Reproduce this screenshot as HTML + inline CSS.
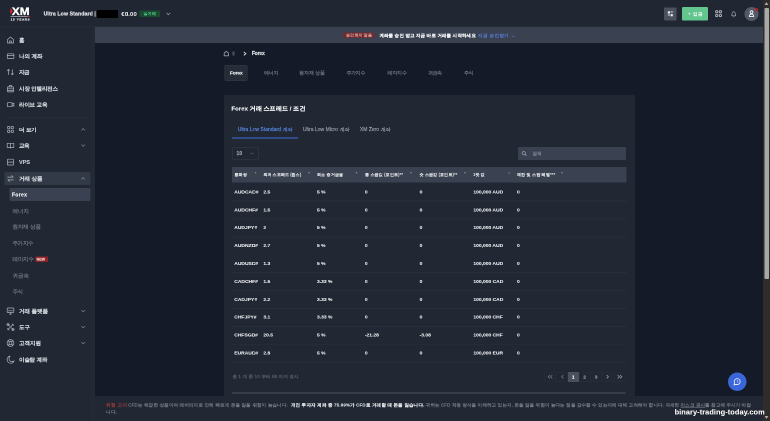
<!DOCTYPE html>
<html><head><meta charset="utf-8">
<style>
*{box-sizing:border-box;margin:0;padding:0}
html,body{width:770px;height:421px;overflow:hidden;background:#141a27;font-family:"Liberation Sans",sans-serif}
#root{position:absolute;left:0;top:0;width:1540px;height:842px;transform:scale(0.5);transform-origin:0 0;overflow:hidden;background:#141a27;will-change:transform}
.a{position:absolute;white-space:nowrap}
.t{font-family:"Liberation Sans",sans-serif;-webkit-text-stroke:0.3px currentColor}
svg{overflow:visible}
b{font-weight:bold}
</style></head><body><div id="root">
<div class="a" style="left:0px;top:0px;width:1526px;height:54px;background:#202632;"></div>
<div class="a" style="left:0px;top:53.0px;width:1526px;height:1.0px;background:#2a303b;"></div>
<div class="a" style="left:0px;top:54px;width:190px;height:788px;background:#212733;"></div>
<div class="a" style="left:182px;top:54px;width:8px;height:788px;background:#232935;"></div>
<div class="a" style="left:190px;top:54px;width:1336px;height:32px;background:#3a4150;"></div>
<svg class="a" style="left:20px;top:14px;" width="42px" height="28px" viewBox="0 0 21 14"><polygon points="0.3,0.9 2.9,4.1 0.3,7.4" fill="#e0282e"/><text x="1.9" y="8.2" font-family="Liberation Sans" font-weight="bold" font-size="10.8" fill="#fff" stroke="#fff" stroke-width="0.35" textLength="17.6" lengthAdjust="spacingAndGlyphs">XM</text><rect x="0.5" y="9.1" width="17" height="0.8" fill="#aab0b8"/><rect x="17.5" y="9.1" width="2.4" height="0.8" fill="#e0282e"/><text x="0.7" y="13.5" font-family="Liberation Sans" font-weight="bold" font-size="3.0" fill="#e4e6ea" stroke="#e4e6ea" stroke-width="0.2" textLength="18.9" lengthAdjust="spacing">15 YEARS</text></svg>
<div class="a t" style="left:87.2px;top:20.28px;line-height:16.64px;font-size:10.4px;color:#e6e8ec;font-weight:bold;letter-spacing:0.182px;">Ultra Low Standard |</div>
<div class="a" style="left:194px;top:20px;width:41.6px;height:16.4px;background:#000;"></div>
<div class="a t" style="left:242.6px;top:19.16px;line-height:18.88px;font-size:11.8px;color:#eef0f3;font-weight:bold;-webkit-text-stroke:0;letter-spacing:0.374px;">€0.00</div>
<div class="a" style="left:279.0px;top:21.0px;width:41.0px;height:13.0px;background:#1b4a31;border-radius:1px;"></div>
<div class="a t" style="left:287.2px;top:22.0px;line-height:12.8px;font-size:8.0px;color:#50cc8c;font-weight:normal;letter-spacing:0.18px;">실거래</div>
<svg class="a" style="left:332.4px;top:25.2px;" width="9.2px" height="5.6px" viewBox="0 0 4.6 2.8"><polyline points="0.4,0.4 2.3,2.3 4.2,0.4" fill="none" stroke="#9aa0a9" stroke-width="0.7"/></svg>
<div class="a" style="left:1328px;top:15.0px;width:25.0px;height:25.6px;background:#4b515d;border-radius:2px;"></div>
<svg class="a" style="left:1335.2px;top:22.4px;" width="11.2px" height="11.2px" viewBox="0 0 5.6 5.6"><rect x="0.3" y="0.3" width="2.2" height="2.2" fill="#eceef1"/><rect x="3.1" y="3.1" width="2.2" height="2.2" fill="#eceef1"/><path d="M3.1,0.6 L5.3,0.6 M3.1,1.6 L5.3,1.6 M0.3,3.6 L2.5,3.6 M0.3,4.6 L2.5,4.6" stroke="#eceef1" stroke-width="0.45"/></svg>
<div class="a" style="left:1364px;top:14px;width:52px;height:27.4px;background:#62c68e;border-radius:2.5px;"></div>
<div class="a t" style="left:1376.0px;top:21.52px;line-height:13.76px;font-size:8.6px;color:#ffffff;font-weight:normal;letter-spacing:1.265px;">+ 입금</div>
<svg class="a" style="left:1429.8px;top:19.8px;" width="14.4px" height="14.4px" viewBox="0 0 7.2 7.2"><circle cx="1.75" cy="1.75" r="1.15" fill="none" stroke="#aab0b9" stroke-width="0.95"/><circle cx="5.45" cy="1.75" r="1.15" fill="none" stroke="#aab0b9" stroke-width="0.95"/><circle cx="1.75" cy="5.45" r="1.15" fill="none" stroke="#aab0b9" stroke-width="0.95"/><circle cx="5.45" cy="5.45" r="1.15" fill="none" stroke="#aab0b9" stroke-width="0.95"/></svg>
<svg class="a" style="left:1460.8px;top:21.2px;" width="12.8px" height="14px" viewBox="0 0 6.4 7"><path d="M1.2,5.3 C1.6,4.7 1.5,3.8 1.6,3.1 C1.8,1.9 2.4,1.2 3.2,1.2 C4.0,1.2 4.6,1.9 4.8,3.1 C4.9,3.8 4.8,4.7 5.2,5.3 Z" fill="none" stroke="#a3a9b2" stroke-width="0.7" stroke-linejoin="round"/><path d="M2.6,6.1 Q3.2,6.6 3.8,6.1" fill="none" stroke="#a3a9b2" stroke-width="0.6"/></svg>
<div class="a" style="left:1488.6px;top:14px;width:28.0px;height:28px;background:#535965;border-radius:50%;"></div>
<svg class="a" style="left:1496.6px;top:20.0px;" width="12px" height="14.8px" viewBox="0 0 6 7.4"><circle cx="3" cy="2.1" r="1.35" fill="none" stroke="#f2f3f5" stroke-width="0.9"/><path d="M0.8,6.6 C0.9,4.8 1.9,4.1 3,4.1 C4.1,4.1 5.1,4.8 5.2,6.6 Z" fill="none" stroke="#f2f3f5" stroke-width="0.9" stroke-linejoin="round"/></svg>
<div class="a" style="left:1510.2px;top:16.0px;width:5.6px;height:5.6px;background:#b81e22;border-radius:50%;"></div>
<div class="a" style="left:686px;top:64.6px;width:63.4px;height:11.6px;background:#6e2a2d;border-radius:3px;"></div>
<div class="a t" style="left:692.2px;top:64.76px;line-height:12.48px;font-size:7.8px;color:#f0b6b6;font-weight:normal;letter-spacing:0.229px;">승인되지 않음</div>
<div class="a t" style="left:758.8px;top:63.6px;line-height:14.4px;font-size:9.0px;color:#eef0f3;font-weight:bold;letter-spacing:0.284px;">계좌를 승인 받고 지금 바로 거래를 시작하세요</div>
<div class="a t" style="left:956px;top:63.6px;line-height:14.4px;font-size:9.0px;color:#5a86e6;font-weight:normal;letter-spacing:0.827px;">지금 승인받기 →</div>
<div class="a" style="left:8.6px;top:344.4px;width:172.0px;height:25.4px;background:#333a47;border-radius:2.5px;"></div>
<div class="a" style="left:19.0px;top:376.0px;width:161.6px;height:26.0px;background:#3a4150;border-radius:2.5px;"></div>
<svg class="a" style="left:13.0px;top:71.8px;" width="16px" height="16px" viewBox="0 0 8 8"><path d="M1,3.6 L4,1 L7,3.6 L7,7 L1,7 Z M3.1,7 L3.1,5 L4.9,5 L4.9,7" fill="none" stroke="#aeb4bd" stroke-width="0.7" stroke-linejoin="round" stroke-linecap="round"/></svg>
<div class="a t" style="left:38.0px;top:71.6px;line-height:17.6px;font-size:11.0px;color:#d4d8de;font-weight:bold;-webkit-text-stroke:0.1px currentColor;letter-spacing:-0.73px;">홈</div>
<svg class="a" style="left:13.0px;top:104.0px;" width="16px" height="16px" viewBox="0 0 8 8"><rect x="0.8" y="1.8" width="6.6" height="4.8" rx="0.8" fill="none" stroke="#aeb4bd" stroke-width="0.7" stroke-linejoin="round" stroke-linecap="round"/><line x1="0.8" y1="3.4" x2="7.4" y2="3.4" fill="none" stroke="#aeb4bd" stroke-width="0.7" stroke-linejoin="round" stroke-linecap="round"/></svg>
<div class="a t" style="left:38.0px;top:103.8px;line-height:17.6px;font-size:11.0px;color:#d4d8de;font-weight:bold;-webkit-text-stroke:0.1px currentColor;letter-spacing:0.077px;">나의 계좌</div>
<svg class="a" style="left:13.0px;top:136.4px;" width="16px" height="16px" viewBox="0 0 8 8"><path d="M2,6.6 L2,1.4 M0.9,2.5 L2,1.4 L3.1,2.5 M5.8,1.6 L5.8,6.8 M4.7,5.7 L5.8,6.8 L6.9,5.7" fill="none" stroke="#aeb4bd" stroke-width="0.7" stroke-linejoin="round" stroke-linecap="round"/></svg>
<div class="a t" style="left:38.0px;top:136.2px;line-height:17.6px;font-size:11.0px;color:#d4d8de;font-weight:bold;-webkit-text-stroke:0.1px currentColor;letter-spacing:-0.83px;">자금</div>
<svg class="a" style="left:13.0px;top:169.0px;" width="16px" height="16px" viewBox="0 0 8 8"><rect x="1" y="2.4" width="6" height="5" rx="0.5" fill="none" stroke="#aeb4bd" stroke-width="0.7" stroke-linejoin="round" stroke-linecap="round"/><path d="M2.8,2.4 L2.8,1.1 L5.2,1.1 L5.2,2.4 M1,4.3 L7,4.3 M1,5.9 L7,5.9" fill="none" stroke="#aeb4bd" stroke-width="0.7" stroke-linejoin="round" stroke-linecap="round"/></svg>
<div class="a t" style="left:38.0px;top:168.8px;line-height:17.6px;font-size:11.0px;color:#d4d8de;font-weight:bold;-webkit-text-stroke:0.1px currentColor;letter-spacing:-0.27px;">시장 인텔리전스</div>
<svg class="a" style="left:13.0px;top:201.4px;" width="16px" height="16px" viewBox="0 0 8 8"><rect x="0.8" y="2.2" width="4.8" height="4" rx="0.6" fill="none" stroke="#aeb4bd" stroke-width="0.7" stroke-linejoin="round" stroke-linecap="round"/><path d="M5.6,3.6 L7.4,2.6 L7.4,5.8 L5.6,4.8" fill="none" stroke="#aeb4bd" stroke-width="0.7" stroke-linejoin="round" stroke-linecap="round"/></svg>
<div class="a t" style="left:38.0px;top:201.2px;line-height:17.6px;font-size:11.0px;color:#d4d8de;font-weight:bold;-webkit-text-stroke:0.1px currentColor;letter-spacing:-0.258px;">라이브 교육</div>
<svg class="a" style="left:13.0px;top:251.2px;" width="16px" height="16px" viewBox="0 0 8 8"><rect x="1" y="0.9" width="2.4" height="2.4" rx="1" fill="none" stroke="#aeb4bd" stroke-width="0.7" stroke-linejoin="round" stroke-linecap="round"/><rect x="4.6" y="0.9" width="2.4" height="2.4" rx="1" fill="none" stroke="#aeb4bd" stroke-width="0.7" stroke-linejoin="round" stroke-linecap="round"/><rect x="1" y="4.6" width="2.4" height="2.4" rx="1" fill="none" stroke="#aeb4bd" stroke-width="0.7" stroke-linejoin="round" stroke-linecap="round"/><rect x="4.6" y="4.6" width="2.4" height="2.4" rx="1" fill="none" stroke="#aeb4bd" stroke-width="0.7" stroke-linejoin="round" stroke-linecap="round"/></svg>
<div class="a t" style="left:38.0px;top:251.0px;line-height:17.6px;font-size:11.0px;color:#d4d8de;font-weight:bold;-webkit-text-stroke:0.1px currentColor;letter-spacing:-0.231px;">더 보기</div>
<svg class="a" style="left:13.0px;top:283.4px;" width="16px" height="16px" viewBox="0 0 8 8"><path d="M0.7,1.8 L3,1.8 Q4,1.8 4,2.8 L4,6.6 Q4,6 3,6 L0.7,6 Z M7.3,1.8 L5,1.8 Q4,1.8 4,2.8 M4,6.6 Q4,6 5,6 L7.3,6 L7.3,1.8" fill="none" stroke="#aeb4bd" stroke-width="0.7" stroke-linejoin="round" stroke-linecap="round"/></svg>
<div class="a t" style="left:38.0px;top:283.2px;line-height:17.6px;font-size:11.0px;color:#d4d8de;font-weight:bold;-webkit-text-stroke:0.1px currentColor;letter-spacing:-1.23px;">교육</div>
<svg class="a" style="left:13.0px;top:316.0px;" width="16px" height="16px" viewBox="0 0 8 8"><rect x="1" y="1.2" width="6" height="5.8" rx="0.4" fill="none" stroke="#aeb4bd" stroke-width="0.7" stroke-linejoin="round" stroke-linecap="round"/><line x1="1" y1="4.1" x2="7" y2="4.1" fill="none" stroke="#aeb4bd" stroke-width="0.7" stroke-linejoin="round" stroke-linecap="round"/></svg>
<div class="a t" style="left:38.0px;top:315.8px;line-height:17.6px;font-size:11.0px;color:#d4d8de;font-weight:bold;-webkit-text-stroke:0.1px currentColor;letter-spacing:0.077px;">VPS</div>
<svg class="a" style="left:13.0px;top:349.2px;" width="16px" height="16px" viewBox="0 0 8 8"><path d="M1.2,2.6 L6.6,2.6 M5.1,1.1 L6.6,2.6 M6.8,5.4 L1.4,5.4 M2.9,6.9 L1.4,5.4" fill="none" stroke="#aeb4bd" stroke-width="0.7" stroke-linejoin="round" stroke-linecap="round"/></svg>
<div class="a t" style="left:38.0px;top:349.0px;line-height:17.6px;font-size:11.0px;color:#d4d8de;font-weight:bold;-webkit-text-stroke:0.1px currentColor;letter-spacing:-0.073px;">거래 상품</div>
<svg class="a" style="left:13.0px;top:614.0px;" width="16px" height="16px" viewBox="0 0 8 8"><rect x="0.7" y="1.0" width="6.6" height="4.6" rx="0.8" fill="none" stroke="#aeb4bd" stroke-width="0.7" stroke-linejoin="round" stroke-linecap="round"/><path d="M1.8,3.8 L6.2,3.8" fill="none" stroke="#aeb4bd" stroke-width="0.7" stroke-linejoin="round" stroke-linecap="round"/><path d="M3,7.1 L5,7.1 M4,5.6 L4,7.1" fill="none" stroke="#aeb4bd" stroke-width="0.7" stroke-linejoin="round" stroke-linecap="round"/></svg>
<div class="a t" style="left:38.0px;top:613.8px;line-height:17.6px;font-size:11.0px;color:#d4d8de;font-weight:bold;-webkit-text-stroke:0.1px currentColor;letter-spacing:-0.058px;">거래 플랫폼</div>
<svg class="a" style="left:13.0px;top:646.0px;" width="16px" height="16px" viewBox="0 0 8 8"><path d="M1.3,1.3 L3.2,3.2 M4.8,4.8 L6.7,6.7 M6.7,1.3 L1.3,6.7" fill="none" stroke="#aeb4bd" stroke-width="0.7" stroke-linejoin="round" stroke-linecap="round"/><circle cx="1.5" cy="1.5" r="1.05" fill="none" stroke="#aeb4bd" stroke-width="0.7" stroke-linejoin="round" stroke-linecap="round"/><circle cx="6.5" cy="6.5" r="1.05" fill="none" stroke="#aeb4bd" stroke-width="0.7" stroke-linejoin="round" stroke-linecap="round"/><path d="M5.6,1.0 L7,2.4" fill="none" stroke="#aeb4bd" stroke-width="0.7" stroke-linejoin="round" stroke-linecap="round"/><path d="M1,5.6 L2.4,7" fill="none" stroke="#aeb4bd" stroke-width="0.7" stroke-linejoin="round" stroke-linecap="round"/></svg>
<div class="a t" style="left:38.0px;top:645.8px;line-height:17.6px;font-size:11.0px;color:#d4d8de;font-weight:bold;-webkit-text-stroke:0.1px currentColor;letter-spacing:0.17px;">도구</div>
<svg class="a" style="left:13.0px;top:678.4px;" width="16px" height="16px" viewBox="0 0 8 8"><circle cx="4" cy="4" r="3.4" fill="none" stroke="#aeb4bd" stroke-width="0.7" stroke-linejoin="round" stroke-linecap="round"/><circle cx="4" cy="4" r="1.5" fill="none" stroke="#aeb4bd" stroke-width="0.7" stroke-linejoin="round" stroke-linecap="round"/><path d="M1.6,1.6 L2.9,2.9 M6.4,1.6 L5.1,2.9 M1.6,6.4 L2.9,5.1 M6.4,6.4 L5.1,5.1" fill="none" stroke="#aeb4bd" stroke-width="0.7" stroke-linejoin="round" stroke-linecap="round"/></svg>
<div class="a t" style="left:38.0px;top:678.2px;line-height:17.6px;font-size:11.0px;color:#d4d8de;font-weight:bold;-webkit-text-stroke:0.1px currentColor;letter-spacing:-0.143px;">고객지원</div>
<svg class="a" style="left:13.0px;top:711.2px;" width="16px" height="16px" viewBox="0 0 8 8"><path d="M3.6,0.6 A3.6,3.6 0 1 0 7.6,5.4 A3.1,3.1 0 0 1 3.6,0.6 Z" fill="none" stroke="#aeb4bd" stroke-width="0.7" stroke-linejoin="round" stroke-linecap="round"/></svg>
<div class="a t" style="left:38.0px;top:711.0px;line-height:17.6px;font-size:11.0px;color:#d4d8de;font-weight:bold;-webkit-text-stroke:0.1px currentColor;letter-spacing:-0.258px;">이슬람 계좌</div>
<svg class="a" style="left:162.4px;top:256.2px;" width="8.8px" height="6px" viewBox="0 0 4.4 3"><polyline points="0.4,2.4 2.2,0.6 4,2.4" fill="none" stroke="#8d939c" stroke-width="0.6"/></svg>
<svg class="a" style="left:162.4px;top:288.4px;" width="8.8px" height="6px" viewBox="0 0 4.4 3"><polyline points="0.4,0.6 2.2,2.4 4,0.6" fill="none" stroke="#8d939c" stroke-width="0.6"/></svg>
<svg class="a" style="left:162.4px;top:354.2px;" width="8.8px" height="6px" viewBox="0 0 4.4 3"><polyline points="0.4,2.4 2.2,0.6 4,2.4" fill="none" stroke="#8d939c" stroke-width="0.6"/></svg>
<svg class="a" style="left:162.4px;top:619.0px;" width="8.8px" height="6px" viewBox="0 0 4.4 3"><polyline points="0.4,0.6 2.2,2.4 4,0.6" fill="none" stroke="#8d939c" stroke-width="0.6"/></svg>
<svg class="a" style="left:162.4px;top:651.0px;" width="8.8px" height="6px" viewBox="0 0 4.4 3"><polyline points="0.4,0.6 2.2,2.4 4,0.6" fill="none" stroke="#8d939c" stroke-width="0.6"/></svg>
<svg class="a" style="left:162.4px;top:683.4px;" width="8.8px" height="6px" viewBox="0 0 4.4 3"><polyline points="0.4,0.6 2.2,2.4 4,0.6" fill="none" stroke="#8d939c" stroke-width="0.6"/></svg>
<div class="a" style="left:10px;top:234.6px;width:168px;height:1.0px;background:#2b313c;"></div>
<div class="a t" style="left:23.8px;top:381.64px;line-height:16.32px;font-size:10.2px;color:#f0f2f5;font-weight:bold;letter-spacing:0.591px;">Forex</div>
<div class="a t" style="left:24.8px;top:413.56px;line-height:17.28px;font-size:10.8px;color:#878e98;font-weight:normal;-webkit-text-stroke:0.15px currentColor;letter-spacing:-0.022px;">에너지</div>
<div class="a t" style="left:24.8px;top:445.36px;line-height:17.28px;font-size:10.8px;color:#878e98;font-weight:normal;-webkit-text-stroke:0.15px currentColor;letter-spacing:-0.249px;">원자재 상품</div>
<div class="a t" style="left:24.8px;top:477.96px;line-height:17.28px;font-size:10.8px;color:#878e98;font-weight:normal;-webkit-text-stroke:0.15px currentColor;letter-spacing:-0.481px;">주가지수</div>
<div class="a t" style="left:24.8px;top:510.16px;line-height:17.28px;font-size:10.8px;color:#878e98;font-weight:normal;-webkit-text-stroke:0.15px currentColor;letter-spacing:-0.215px;">테마지수</div>
<div class="a t" style="left:24.8px;top:543.16px;line-height:17.28px;font-size:10.8px;color:#878e98;font-weight:normal;-webkit-text-stroke:0.15px currentColor;letter-spacing:-0.022px;">귀금속</div>
<div class="a t" style="left:24.8px;top:574.96px;line-height:17.28px;font-size:10.8px;color:#878e98;font-weight:normal;-webkit-text-stroke:0.15px currentColor;letter-spacing:-0.844px;">주식</div>
<div class="a" style="left:71.2px;top:512.8px;width:25.2px;height:11.0px;background:#8c2326;border-radius:1px;"></div>
<div class="a t" style="left:73.2px;top:513.24px;line-height:11.52px;font-size:7.2px;color:#f3d0d0;font-weight:bold;">NEW</div>
<svg class="a" style="left:447.2px;top:101.2px;" width="11.2px" height="12px" viewBox="0 0 5.6 6"><path d="M0.7,2.6 L2.8,0.8 L4.9,2.6 L4.9,5.3 L0.7,5.3 Z" fill="none" stroke="#9aa0a9" stroke-width="0.85" stroke-linejoin="round"/></svg>
<div class="a" style="left:465.4px;top:102.8px;width:4.0px;height:8.4px;background:#4f5560;border-radius:0.4px;"></div>
<svg class="a" style="left:485.6px;top:103.0px;" width="8px" height="8.8px" viewBox="0 0 4 4.4"><polyline points="0.8,0.5 2.9,2.2 0.8,3.9" fill="none" stroke="#d8dbe0" stroke-width="0.9"/></svg>
<div class="a t" style="left:503.6px;top:99.2px;line-height:16.0px;font-size:10.0px;color:#e6e8ec;font-weight:bold;letter-spacing:-0.334px;">Forex</div>
<div class="a" style="left:448.6px;top:130.2px;width:46.6px;height:31.6px;background:#262c38;border:0.5px solid #343b47;border-radius:2.5px;"></div>
<div class="a t" style="left:459.8px;top:138.12px;line-height:15.36px;font-size:9.6px;color:#eef0f3;font-weight:bold;letter-spacing:-0.167px;">Forex</div>
<div class="a t" style="left:527.6px;top:137.88px;line-height:15.84px;font-size:9.9px;color:#878e98;font-weight:normal;-webkit-text-stroke:0.15px currentColor;letter-spacing:-0.454px;">에너지</div>
<div class="a t" style="left:598.4px;top:137.88px;line-height:15.84px;font-size:9.9px;color:#878e98;font-weight:normal;-webkit-text-stroke:0.15px currentColor;letter-spacing:-0.171px;">원자재 상품</div>
<div class="a t" style="left:692.6px;top:137.88px;line-height:15.84px;font-size:9.9px;color:#878e98;font-weight:normal;-webkit-text-stroke:0.15px currentColor;letter-spacing:-0.569px;">주가지수</div>
<div class="a t" style="left:775.4px;top:137.88px;line-height:15.84px;font-size:9.9px;color:#878e98;font-weight:normal;-webkit-text-stroke:0.15px currentColor;letter-spacing:-0.502px;">테마지수</div>
<div class="a t" style="left:856.0px;top:137.88px;line-height:15.84px;font-size:9.9px;color:#878e98;font-weight:normal;-webkit-text-stroke:0.15px currentColor;letter-spacing:-1.053px;">귀금속</div>
<div class="a t" style="left:927.6px;top:137.88px;line-height:15.84px;font-size:9.9px;color:#878e98;font-weight:normal;-webkit-text-stroke:0.15px currentColor;letter-spacing:-0.507px;">주식</div>
<div class="a" style="left:448px;top:190.2px;width:822.2px;height:669.8px;background:#212733;border-radius:3px;"></div>
<div class="a t" style="left:462.8px;top:208.36px;line-height:18.88px;font-size:11.8px;color:#eef0f3;font-weight:bold;letter-spacing:0.195px;">Forex 거래 스프레드 / 조건</div>
<div class="a t" style="left:475.4px;top:250.6px;line-height:16.0px;font-size:10.0px;color:#5b8be8;font-weight:normal;letter-spacing:0.045px;">Ultra Low Standard 계좌</div>
<div class="a t" style="left:605.8px;top:250.6px;line-height:16.0px;font-size:10.0px;color:#9aa1ab;font-weight:normal;letter-spacing:0.038px;">Ultra Low Micro 계좌</div>
<div class="a t" style="left:720.0px;top:250.6px;line-height:16.0px;font-size:10.0px;color:#9aa1ab;font-weight:normal;letter-spacing:-0.047px;">XM Zero 계좌</div>
<div class="a" style="left:464px;top:275.0px;width:131.6px;height:2.4px;background:#3f6fd6;"></div>
<div class="a" style="left:464px;top:295.0px;width:53.6px;height:23.8px;border:0.5px solid #363d49;border-radius:2px;"></div>
<div class="a t" style="left:473.0px;top:299.4px;line-height:16.0px;font-size:10.0px;color:#a3a9b2;font-weight:bold;letter-spacing:0.175px;">10</div>
<svg class="a" style="left:500.4px;top:305.0px;" width="7.2px" height="4px" viewBox="0 0 3.6 2"><polyline points="0.3,0.3 1.8,1.6 3.3,0.3" fill="none" stroke="#7d848e" stroke-width="0.5"/></svg>
<div class="a" style="left:1036px;top:294px;width:216.4px;height:26px;background:#3a4150;border-radius:2.5px;"></div>
<svg class="a" style="left:1042.6px;top:302px;" width="10.8px" height="10.8px" viewBox="0 0 5.4 5.4"><circle cx="2.2" cy="2.2" r="1.6" fill="none" stroke="#aeb3bb" stroke-width="0.6"/><line x1="3.4" y1="3.4" x2="4.9" y2="4.9" stroke="#aeb3bb" stroke-width="0.7"/></svg>
<div class="a t" style="left:1064.6px;top:300.44px;line-height:14.72px;font-size:9.2px;color:#8e959f;font-weight:normal;letter-spacing:0.844px;">검색</div>
<div class="a" style="left:464px;top:333.8px;width:788.6px;height:31.6px;background:#3a4150;"></div>
<div class="a t" style="left:468.8px;top:343.44px;line-height:13.12px;font-size:8.2px;color:#dcdfe4;font-weight:bold;-webkit-text-stroke:0.1px currentColor;letter-spacing:0.587px;">통화쌍</div>
<svg class="a" style="left:509.4px;top:343.6px;" width="4px" height="3.2px" viewBox="0 0 2 1.6"><polyline points="0.3,1.3 1,0.4 1.7,1.3" fill="none" stroke="#9ca2ab" stroke-width="0.6"/></svg>
<div class="a t" style="left:526.8px;top:343.44px;line-height:13.12px;font-size:8.2px;color:#dcdfe4;font-weight:bold;-webkit-text-stroke:0.1px currentColor;letter-spacing:0.142px;">최저 스프레드 (핍스)</div>
<svg class="a" style="left:616.0px;top:343.6px;" width="4px" height="3.2px" viewBox="0 0 2 1.6"><polyline points="0.3,1.3 1,0.4 1.7,1.3" fill="none" stroke="#9ca2ab" stroke-width="0.6"/></svg>
<div class="a t" style="left:634.0px;top:343.44px;line-height:13.12px;font-size:8.2px;color:#dcdfe4;font-weight:bold;-webkit-text-stroke:0.1px currentColor;letter-spacing:0.349px;">최소 증거금율</div>
<svg class="a" style="left:711.4px;top:343.6px;" width="4px" height="3.2px" viewBox="0 0 2 1.6"><polyline points="0.3,1.3 1,0.4 1.7,1.3" fill="none" stroke="#9ca2ab" stroke-width="0.6"/></svg>
<div class="a t" style="left:729.8px;top:343.44px;line-height:13.12px;font-size:8.2px;color:#dcdfe4;font-weight:bold;-webkit-text-stroke:0.1px currentColor;letter-spacing:0.317px;">롱 스왑값 (포인트)**</div>
<svg class="a" style="left:819.8px;top:343.6px;" width="4px" height="3.2px" viewBox="0 0 2 1.6"><polyline points="0.3,1.3 1,0.4 1.7,1.3" fill="none" stroke="#9ca2ab" stroke-width="0.6"/></svg>
<div class="a t" style="left:839.2px;top:343.44px;line-height:13.12px;font-size:8.2px;color:#dcdfe4;font-weight:bold;-webkit-text-stroke:0.1px currentColor;letter-spacing:0.25px;">숏 스왑값 (포인트)**</div>
<svg class="a" style="left:928.2px;top:343.6px;" width="4px" height="3.2px" viewBox="0 0 2 1.6"><polyline points="0.3,1.3 1,0.4 1.7,1.3" fill="none" stroke="#9ca2ab" stroke-width="0.6"/></svg>
<div class="a t" style="left:946.2px;top:343.44px;line-height:13.12px;font-size:8.2px;color:#dcdfe4;font-weight:bold;-webkit-text-stroke:0.1px currentColor;letter-spacing:0.043px;">1랏 값</div>
<svg class="a" style="left:1015.8px;top:343.6px;" width="4px" height="3.2px" viewBox="0 0 2 1.6"><polyline points="0.3,1.3 1,0.4 1.7,1.3" fill="none" stroke="#9ca2ab" stroke-width="0.6"/></svg>
<div class="a t" style="left:1034.0px;top:343.44px;line-height:13.12px;font-size:8.2px;color:#dcdfe4;font-weight:bold;-webkit-text-stroke:0.1px currentColor;letter-spacing:0.332px;">제한 및 스탑 레벨***</div>
<svg class="a" style="left:1122.0px;top:343.6px;" width="4px" height="3.2px" viewBox="0 0 2 1.6"><polyline points="0.3,1.3 1,0.4 1.7,1.3" fill="none" stroke="#9ca2ab" stroke-width="0.6"/></svg>
<div class="a t" style="left:468.6px;top:375.88px;line-height:15.84px;font-size:9.9px;color:#eceef1;font-weight:bold;-webkit-text-stroke:0.15px currentColor;">AUDCAD#</div>
<div class="a t" style="left:526.8px;top:375.88px;line-height:15.84px;font-size:9.9px;color:#eceef1;font-weight:bold;-webkit-text-stroke:0.15px currentColor;">2.5</div>
<div class="a t" style="left:634.0px;top:375.88px;line-height:15.84px;font-size:9.9px;color:#eceef1;font-weight:bold;-webkit-text-stroke:0.15px currentColor;">5 %</div>
<div class="a t" style="left:729.8px;top:375.88px;line-height:15.84px;font-size:9.9px;color:#eceef1;font-weight:bold;-webkit-text-stroke:0.15px currentColor;">0</div>
<div class="a t" style="left:839.2px;top:375.88px;line-height:15.84px;font-size:9.9px;color:#eceef1;font-weight:bold;-webkit-text-stroke:0.15px currentColor;">0</div>
<div class="a t" style="left:946.8px;top:375.88px;line-height:15.84px;font-size:9.9px;color:#eceef1;font-weight:bold;-webkit-text-stroke:0.15px currentColor;">100,000 AUD</div>
<div class="a t" style="left:1034.0px;top:375.88px;line-height:15.84px;font-size:9.9px;color:#eceef1;font-weight:bold;-webkit-text-stroke:0.15px currentColor;">0</div>
<div class="a" style="left:464px;top:401.2px;width:788.6px;height:1.8px;background:#282e3a;"></div>
<div class="a t" style="left:468.6px;top:411.68px;line-height:15.84px;font-size:9.9px;color:#eceef1;font-weight:bold;-webkit-text-stroke:0.15px currentColor;">AUDCHF#</div>
<div class="a t" style="left:526.8px;top:411.68px;line-height:15.84px;font-size:9.9px;color:#eceef1;font-weight:bold;-webkit-text-stroke:0.15px currentColor;">1.5</div>
<div class="a t" style="left:634.0px;top:411.68px;line-height:15.84px;font-size:9.9px;color:#eceef1;font-weight:bold;-webkit-text-stroke:0.15px currentColor;">5 %</div>
<div class="a t" style="left:729.8px;top:411.68px;line-height:15.84px;font-size:9.9px;color:#eceef1;font-weight:bold;-webkit-text-stroke:0.15px currentColor;">0</div>
<div class="a t" style="left:839.2px;top:411.68px;line-height:15.84px;font-size:9.9px;color:#eceef1;font-weight:bold;-webkit-text-stroke:0.15px currentColor;">0</div>
<div class="a t" style="left:946.8px;top:411.68px;line-height:15.84px;font-size:9.9px;color:#eceef1;font-weight:bold;-webkit-text-stroke:0.15px currentColor;">100,000 AUD</div>
<div class="a t" style="left:1034.0px;top:411.68px;line-height:15.84px;font-size:9.9px;color:#eceef1;font-weight:bold;-webkit-text-stroke:0.15px currentColor;">0</div>
<div class="a" style="left:464px;top:437.0px;width:788.6px;height:1.8px;background:#282e3a;"></div>
<div class="a t" style="left:468.6px;top:447.48px;line-height:15.84px;font-size:9.9px;color:#eceef1;font-weight:bold;-webkit-text-stroke:0.15px currentColor;">AUDJPY#</div>
<div class="a t" style="left:526.8px;top:447.48px;line-height:15.84px;font-size:9.9px;color:#eceef1;font-weight:bold;-webkit-text-stroke:0.15px currentColor;">2</div>
<div class="a t" style="left:634.0px;top:447.48px;line-height:15.84px;font-size:9.9px;color:#eceef1;font-weight:bold;-webkit-text-stroke:0.15px currentColor;">5 %</div>
<div class="a t" style="left:729.8px;top:447.48px;line-height:15.84px;font-size:9.9px;color:#eceef1;font-weight:bold;-webkit-text-stroke:0.15px currentColor;">0</div>
<div class="a t" style="left:839.2px;top:447.48px;line-height:15.84px;font-size:9.9px;color:#eceef1;font-weight:bold;-webkit-text-stroke:0.15px currentColor;">0</div>
<div class="a t" style="left:946.8px;top:447.48px;line-height:15.84px;font-size:9.9px;color:#eceef1;font-weight:bold;-webkit-text-stroke:0.15px currentColor;">100,000 AUD</div>
<div class="a t" style="left:1034.0px;top:447.48px;line-height:15.84px;font-size:9.9px;color:#eceef1;font-weight:bold;-webkit-text-stroke:0.15px currentColor;">0</div>
<div class="a" style="left:464px;top:472.8px;width:788.6px;height:1.8px;background:#282e3a;"></div>
<div class="a t" style="left:468.6px;top:483.28px;line-height:15.84px;font-size:9.9px;color:#eceef1;font-weight:bold;-webkit-text-stroke:0.15px currentColor;">AUDNZD#</div>
<div class="a t" style="left:526.8px;top:483.28px;line-height:15.84px;font-size:9.9px;color:#eceef1;font-weight:bold;-webkit-text-stroke:0.15px currentColor;">2.7</div>
<div class="a t" style="left:634.0px;top:483.28px;line-height:15.84px;font-size:9.9px;color:#eceef1;font-weight:bold;-webkit-text-stroke:0.15px currentColor;">5 %</div>
<div class="a t" style="left:729.8px;top:483.28px;line-height:15.84px;font-size:9.9px;color:#eceef1;font-weight:bold;-webkit-text-stroke:0.15px currentColor;">0</div>
<div class="a t" style="left:839.2px;top:483.28px;line-height:15.84px;font-size:9.9px;color:#eceef1;font-weight:bold;-webkit-text-stroke:0.15px currentColor;">0</div>
<div class="a t" style="left:946.8px;top:483.28px;line-height:15.84px;font-size:9.9px;color:#eceef1;font-weight:bold;-webkit-text-stroke:0.15px currentColor;">100,000 AUD</div>
<div class="a t" style="left:1034.0px;top:483.28px;line-height:15.84px;font-size:9.9px;color:#eceef1;font-weight:bold;-webkit-text-stroke:0.15px currentColor;">0</div>
<div class="a" style="left:464px;top:508.6px;width:788.6px;height:1.8px;background:#282e3a;"></div>
<div class="a t" style="left:468.6px;top:519.08px;line-height:15.84px;font-size:9.9px;color:#eceef1;font-weight:bold;-webkit-text-stroke:0.15px currentColor;">AUDUSD#</div>
<div class="a t" style="left:526.8px;top:519.08px;line-height:15.84px;font-size:9.9px;color:#eceef1;font-weight:bold;-webkit-text-stroke:0.15px currentColor;">1.3</div>
<div class="a t" style="left:634.0px;top:519.08px;line-height:15.84px;font-size:9.9px;color:#eceef1;font-weight:bold;-webkit-text-stroke:0.15px currentColor;">5 %</div>
<div class="a t" style="left:729.8px;top:519.08px;line-height:15.84px;font-size:9.9px;color:#eceef1;font-weight:bold;-webkit-text-stroke:0.15px currentColor;">0</div>
<div class="a t" style="left:839.2px;top:519.08px;line-height:15.84px;font-size:9.9px;color:#eceef1;font-weight:bold;-webkit-text-stroke:0.15px currentColor;">0</div>
<div class="a t" style="left:946.8px;top:519.08px;line-height:15.84px;font-size:9.9px;color:#eceef1;font-weight:bold;-webkit-text-stroke:0.15px currentColor;">100,000 AUD</div>
<div class="a t" style="left:1034.0px;top:519.08px;line-height:15.84px;font-size:9.9px;color:#eceef1;font-weight:bold;-webkit-text-stroke:0.15px currentColor;">0</div>
<div class="a" style="left:464px;top:544.4px;width:788.6px;height:1.8px;background:#282e3a;"></div>
<div class="a t" style="left:468.6px;top:554.88px;line-height:15.84px;font-size:9.9px;color:#eceef1;font-weight:bold;-webkit-text-stroke:0.15px currentColor;">CADCHF#</div>
<div class="a t" style="left:526.8px;top:554.88px;line-height:15.84px;font-size:9.9px;color:#eceef1;font-weight:bold;-webkit-text-stroke:0.15px currentColor;">1.5</div>
<div class="a t" style="left:634.0px;top:554.88px;line-height:15.84px;font-size:9.9px;color:#eceef1;font-weight:bold;-webkit-text-stroke:0.15px currentColor;">3.33 %</div>
<div class="a t" style="left:729.8px;top:554.88px;line-height:15.84px;font-size:9.9px;color:#eceef1;font-weight:bold;-webkit-text-stroke:0.15px currentColor;">0</div>
<div class="a t" style="left:839.2px;top:554.88px;line-height:15.84px;font-size:9.9px;color:#eceef1;font-weight:bold;-webkit-text-stroke:0.15px currentColor;">0</div>
<div class="a t" style="left:946.8px;top:554.88px;line-height:15.84px;font-size:9.9px;color:#eceef1;font-weight:bold;-webkit-text-stroke:0.15px currentColor;">100,000 CAD</div>
<div class="a t" style="left:1034.0px;top:554.88px;line-height:15.84px;font-size:9.9px;color:#eceef1;font-weight:bold;-webkit-text-stroke:0.15px currentColor;">0</div>
<div class="a" style="left:464px;top:580.2px;width:788.6px;height:1.8px;background:#282e3a;"></div>
<div class="a t" style="left:468.6px;top:590.68px;line-height:15.84px;font-size:9.9px;color:#eceef1;font-weight:bold;-webkit-text-stroke:0.15px currentColor;">CADJPY#</div>
<div class="a t" style="left:526.8px;top:590.68px;line-height:15.84px;font-size:9.9px;color:#eceef1;font-weight:bold;-webkit-text-stroke:0.15px currentColor;">2.2</div>
<div class="a t" style="left:634.0px;top:590.68px;line-height:15.84px;font-size:9.9px;color:#eceef1;font-weight:bold;-webkit-text-stroke:0.15px currentColor;">3.33 %</div>
<div class="a t" style="left:729.8px;top:590.68px;line-height:15.84px;font-size:9.9px;color:#eceef1;font-weight:bold;-webkit-text-stroke:0.15px currentColor;">0</div>
<div class="a t" style="left:839.2px;top:590.68px;line-height:15.84px;font-size:9.9px;color:#eceef1;font-weight:bold;-webkit-text-stroke:0.15px currentColor;">0</div>
<div class="a t" style="left:946.8px;top:590.68px;line-height:15.84px;font-size:9.9px;color:#eceef1;font-weight:bold;-webkit-text-stroke:0.15px currentColor;">100,000 CAD</div>
<div class="a t" style="left:1034.0px;top:590.68px;line-height:15.84px;font-size:9.9px;color:#eceef1;font-weight:bold;-webkit-text-stroke:0.15px currentColor;">0</div>
<div class="a" style="left:464px;top:616.0px;width:788.6px;height:1.8px;background:#282e3a;"></div>
<div class="a t" style="left:468.6px;top:626.48px;line-height:15.84px;font-size:9.9px;color:#eceef1;font-weight:bold;-webkit-text-stroke:0.15px currentColor;">CHFJPY#</div>
<div class="a t" style="left:526.8px;top:626.48px;line-height:15.84px;font-size:9.9px;color:#eceef1;font-weight:bold;-webkit-text-stroke:0.15px currentColor;">3.1</div>
<div class="a t" style="left:634.0px;top:626.48px;line-height:15.84px;font-size:9.9px;color:#eceef1;font-weight:bold;-webkit-text-stroke:0.15px currentColor;">3.33 %</div>
<div class="a t" style="left:729.8px;top:626.48px;line-height:15.84px;font-size:9.9px;color:#eceef1;font-weight:bold;-webkit-text-stroke:0.15px currentColor;">0</div>
<div class="a t" style="left:839.2px;top:626.48px;line-height:15.84px;font-size:9.9px;color:#eceef1;font-weight:bold;-webkit-text-stroke:0.15px currentColor;">0</div>
<div class="a t" style="left:946.8px;top:626.48px;line-height:15.84px;font-size:9.9px;color:#eceef1;font-weight:bold;-webkit-text-stroke:0.15px currentColor;">100,000 CHF</div>
<div class="a t" style="left:1034.0px;top:626.48px;line-height:15.84px;font-size:9.9px;color:#eceef1;font-weight:bold;-webkit-text-stroke:0.15px currentColor;">0</div>
<div class="a" style="left:464px;top:651.8px;width:788.6px;height:1.8px;background:#282e3a;"></div>
<div class="a t" style="left:468.6px;top:662.28px;line-height:15.84px;font-size:9.9px;color:#eceef1;font-weight:bold;-webkit-text-stroke:0.15px currentColor;">CHFSGD#</div>
<div class="a t" style="left:526.8px;top:662.28px;line-height:15.84px;font-size:9.9px;color:#eceef1;font-weight:bold;-webkit-text-stroke:0.15px currentColor;">20.5</div>
<div class="a t" style="left:634.0px;top:662.28px;line-height:15.84px;font-size:9.9px;color:#eceef1;font-weight:bold;-webkit-text-stroke:0.15px currentColor;">5 %</div>
<div class="a t" style="left:729.8px;top:662.28px;line-height:15.84px;font-size:9.9px;color:#eceef1;font-weight:bold;-webkit-text-stroke:0.15px currentColor;">-21.28</div>
<div class="a t" style="left:839.2px;top:662.28px;line-height:15.84px;font-size:9.9px;color:#eceef1;font-weight:bold;-webkit-text-stroke:0.15px currentColor;">-3.08</div>
<div class="a t" style="left:946.8px;top:662.28px;line-height:15.84px;font-size:9.9px;color:#eceef1;font-weight:bold;-webkit-text-stroke:0.15px currentColor;">100,000 CHF</div>
<div class="a t" style="left:1034.0px;top:662.28px;line-height:15.84px;font-size:9.9px;color:#eceef1;font-weight:bold;-webkit-text-stroke:0.15px currentColor;">0</div>
<div class="a" style="left:464px;top:687.6px;width:788.6px;height:1.8px;background:#282e3a;"></div>
<div class="a t" style="left:468.6px;top:698.08px;line-height:15.84px;font-size:9.9px;color:#eceef1;font-weight:bold;-webkit-text-stroke:0.15px currentColor;">EURAUD#</div>
<div class="a t" style="left:526.8px;top:698.08px;line-height:15.84px;font-size:9.9px;color:#eceef1;font-weight:bold;-webkit-text-stroke:0.15px currentColor;">2.8</div>
<div class="a t" style="left:634.0px;top:698.08px;line-height:15.84px;font-size:9.9px;color:#eceef1;font-weight:bold;-webkit-text-stroke:0.15px currentColor;">5 %</div>
<div class="a t" style="left:729.8px;top:698.08px;line-height:15.84px;font-size:9.9px;color:#eceef1;font-weight:bold;-webkit-text-stroke:0.15px currentColor;">0</div>
<div class="a t" style="left:839.2px;top:698.08px;line-height:15.84px;font-size:9.9px;color:#eceef1;font-weight:bold;-webkit-text-stroke:0.15px currentColor;">0</div>
<div class="a t" style="left:946.8px;top:698.08px;line-height:15.84px;font-size:9.9px;color:#eceef1;font-weight:bold;-webkit-text-stroke:0.15px currentColor;">100,000 EUR</div>
<div class="a t" style="left:1034.0px;top:698.08px;line-height:15.84px;font-size:9.9px;color:#eceef1;font-weight:bold;-webkit-text-stroke:0.15px currentColor;">0</div>
<div class="a" style="left:464px;top:723.4px;width:788.6px;height:1.8px;background:#282e3a;"></div>
<div class="a t" style="left:464.8px;top:746.44px;line-height:14.72px;font-size:9.2px;color:#5f6671;font-weight:normal;letter-spacing:0.25px;">총 1 개 중 10 부터 55 까지 표시</div>
<div class="a" style="left:1088.4px;top:743.6px;width:24.0px;height:19.6px;border:0.5px solid #272d38;"></div>
<div class="a" style="left:1112.4px;top:743.6px;width:23.6px;height:19.6px;border:0.5px solid #272d38;"></div>
<div class="a" style="left:1157.6px;top:743.6px;width:23.0px;height:19.6px;border:0.5px solid #272d38;"></div>
<div class="a" style="left:1180.6px;top:743.6px;width:23.4px;height:19.6px;border:0.5px solid #272d38;"></div>
<div class="a" style="left:1204.0px;top:743.6px;width:23.6px;height:19.6px;border:0.5px solid #272d38;"></div>
<div class="a" style="left:1227.6px;top:743.6px;width:24.4px;height:19.6px;border:0.5px solid #272d38;"></div>
<svg class="a" style="left:1094.8px;top:749.2px;" width="11.2px" height="8.8px" viewBox="0 0 5.6 4.4"><polyline points="2.4,0.5 0.7,2.2 2.4,3.9" fill="none" stroke="#6b727c" stroke-width="0.85"/><polyline points="4.8,0.5 3.1,2.2 4.8,3.9" fill="none" stroke="#6b727c" stroke-width="0.85"/></svg>
<svg class="a" style="left:1121.6px;top:749.2px;" width="6.4px" height="8.8px" viewBox="0 0 3.2 4.4"><polyline points="2.4,0.5 0.7,2.2 2.4,3.9" fill="none" stroke="#6b727c" stroke-width="0.85"/></svg>
<div class="a" style="left:1136.0px;top:743.6px;width:21.6px;height:19.6px;background:#4a515d;"></div>
<div class="a t" style="left:1143.8px;top:746.36px;line-height:15.68px;font-size:9.8px;color:#f0f2f5;font-weight:bold;">1</div>
<div class="a t" style="left:1166.4px;top:746.36px;line-height:15.68px;font-size:9.8px;color:#8f96a0;font-weight:bold;">2</div>
<div class="a t" style="left:1189.6px;top:746.36px;line-height:15.68px;font-size:9.8px;color:#8f96a0;font-weight:bold;">3</div>
<svg class="a" style="left:1212.4px;top:749.2px;" width="6.4px" height="8.8px" viewBox="0 0 3.2 4.4"><polyline points="0.7,0.5 2.4,2.2 0.7,3.9" fill="none" stroke="#8f96a0" stroke-width="0.85"/></svg>
<svg class="a" style="left:1234.4px;top:749.2px;" width="11.2px" height="8.8px" viewBox="0 0 5.6 4.4"><polyline points="0.7,0.5 2.4,2.2 0.7,3.9" fill="none" stroke="#8f96a0" stroke-width="0.85"/><polyline points="3.1,0.5 4.8,2.2 3.1,3.9" fill="none" stroke="#8f96a0" stroke-width="0.85"/></svg>
<div class="a" style="left:464px;top:784.6px;width:787.0px;height:2.6px;background:#4d535e;border-radius:1px;"></div>
<div class="a" style="left:190px;top:791.6px;width:1336px;height:50.4px;background:#212834;"></div>
<div class="a t" style="left:212.4px;top:802.76px;line-height:14.08px;font-size:8.8px;color:#b03c3c;font-weight:normal;letter-spacing:0.741px;">위험 고지</div>
<div class="a t" style="left:256.6px;top:802.76px;line-height:14.08px;font-size:8.8px;color:#80868f;font-weight:normal;letter-spacing:0.378px;">CFD는 복잡한 상품이며 레버리지로 인해 빠르게 돈을 잃을 위험이 높습니다.</div>
<div class="a t" style="left:581.6px;top:802.76px;line-height:14.08px;font-size:8.8px;color:#e9ebee;font-weight:bold;-webkit-text-stroke:0.1px currentColor;letter-spacing:0.386px;">개인 투자자 계좌 중 75.99%가 CFD로 거래할 때 돈을 잃습니다.</div>
<div class="a t" style="left:851.4px;top:802.76px;line-height:14.08px;font-size:8.8px;color:#80868f;font-weight:normal;letter-spacing:0.283px;">귀하는 CFD 작동 방식을 이해하고 있는지, 돈을 잃을 위험이 높다는 점을 감수할 수 있는지에 대해 고려해야 합니다. 자세한 <u>리스크 공시</u>를 참고해 주시기 바랍</div>
<div class="a t" style="left:212.0px;top:816.76px;line-height:14.08px;font-size:8.8px;color:#80868f;font-weight:normal;letter-spacing:0.981px;">니다.</div>
<div class="a" style="left:1455.6px;top:744.6px;width:37.8px;height:37.8px;background:#3b66da;border-radius:50%;"></div>
<svg class="a" style="left:1466.4px;top:756.0px;" width="16px" height="16px" viewBox="0 0 8 8"><path d="M1,7 L1.6,5.2 A3,3 0 1 1 3,6.4 Z" fill="none" stroke="#fff" stroke-width="0.75" stroke-linejoin="round"/><path d="M4.3,2.4 L4.3,4 L5.4,4" fill="none" stroke="#fff" stroke-width="0.6"/></svg>
<div class="a" style="left:1526px;top:0px;width:14px;height:842px;background:#2f2d2b;"></div>
<div class="a" style="left:1529.2px;top:16.4px;width:9.2px;height:542.0px;background:#a9a9a9;border-radius:2px;"></div>
<svg class="a" style="left:1528px;top:3.0px;" width="10px" height="8px" viewBox="0 0 5 4"><polygon points="0.6,3.4 2.5,0.8 4.4,3.4" fill="#b8b8b8"/></svg>
<svg class="a" style="left:1528px;top:831.0px;" width="10px" height="8px" viewBox="0 0 5 4"><polygon points="0.6,0.6 2.5,3.2 4.4,0.6" fill="#b8b8b8"/></svg>
<div class="a t" style="left:1349.2px;top:812.76px;line-height:23.68px;font-size:14.8px;color:#ffffff;font-weight:bold;text-shadow:0 0 1.5px #000,0 0 1px #000;-webkit-text-stroke:0.2px currentColor;letter-spacing:0.127px;">binary-trading-today.com</div>
</div></body></html>
